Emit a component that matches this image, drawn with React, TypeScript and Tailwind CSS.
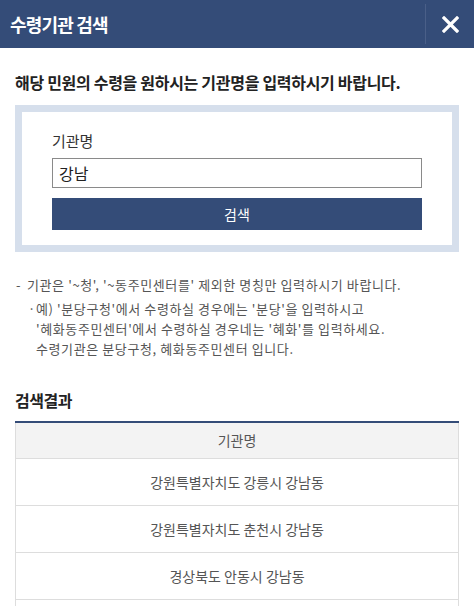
import { useState } from "react";

const results = [
  "강원특별자치도 강릉시 강남동",
  "강원특별자치도 춘천시 강남동",
  "경상북도 안동시 강남동",
  "경상북도 영주시 강남동",
];

export default function App() {
  const [keyword, setKeyword] = useState("강남");

  return (
    <div
      className="w-[474px] h-[606px] overflow-hidden bg-white"
      style={{ fontFamily: '"Noto Sans CJK KR", "Noto Sans", sans-serif' }}
    >
      {/* header */}
      <div className="h-12 bg-[#344c78] flex items-center justify-between">
        <h1 className="pl-[10px] text-[18px] font-bold text-white tracking-[-0.8px]">
          수령기관 검색
        </h1>
        <div className="flex items-center h-full">
          <div className="w-px h-10 bg-[#4a5f88]" />
          <button className="w-12 h-full flex items-center justify-center">
            <svg width="17" height="17" viewBox="0 0 17 17">
              <path
                d="M2 2L15 15M15 2L2 15"
                stroke="white"
                strokeWidth="3.2"
                strokeLinecap="square"
              />
            </svg>
          </button>
        </div>
      </div>

      <div className="px-[15px]">
        <p className="pt-[24px] text-[16px] leading-5 font-bold text-[#222] tracking-[-0.3px]">
          해당 민원의 수령을 원하시는 기관명을 입력하시기 바랍니다.
        </p>

        {/* search box */}
        <div className="mt-[13px] border-[7px] border-[#d6dfec] px-[30px] pt-[19px] pb-[15px]">
          <label className="block text-[15px] leading-5 text-[#333] mb-[7px]">기관명</label>
          <input
            value={keyword}
            onChange={(e) => setKeyword(e.target.value)}
            className="w-full h-[30px] border border-[#8a8a8a] px-[6px] text-[16px] text-[#222] outline-none"
          />
          <button className="mt-[10px] w-full h-[32px] bg-[#344c78] text-white text-[14px]">
            검색
          </button>
        </div>

        {/* notes */}
        <ul className="mt-[23px] text-[13px] leading-5 text-[#555] tracking-[0.6px]">
          <li className="flex pl-px">
            <span className="w-[11px] shrink-0">-</span>
            <span>기관은 '~청', '~동주민센터를' 제외한 명칭만 입력하시기 바랍니다.</span>
          </li>
          <li className="flex mt-1 pl-[13px]">
            <span className="w-[8px] shrink-0">·</span>
            <span>
              예) '분당구청'에서 수령하실 경우에는 '분당'을 입력하시고
              <br />
              '혜화동주민센터'에서 수령하실 경우네는 '혜화'를 입력하세요.
              <br />
              수령기관은 분당구청, 혜화동주민센터 입니다.
            </span>
          </li>
        </ul>

        {/* results */}
        <h2 className="mt-[30px] mb-[10px] text-[16px] leading-[22px] font-bold text-[#222] tracking-[-0.5px]">
          검색결과
        </h2>
        <div className="border-t-2 border-[#344c78]">
          <div className="h-[36px] bg-[#f3f3f3] border-x border-b border-[#dddddd] flex items-center justify-center text-[14px] text-[#555]">
            기관명
          </div>
          {results.map((name) => (
            <div
              key={name}
              className="h-[47px] border-x border-b border-[#dddddd] flex items-center justify-center text-[14px] text-[#555]"
            >
              {name}
            </div>
          ))}
        </div>
      </div>
    </div>
  );
}
